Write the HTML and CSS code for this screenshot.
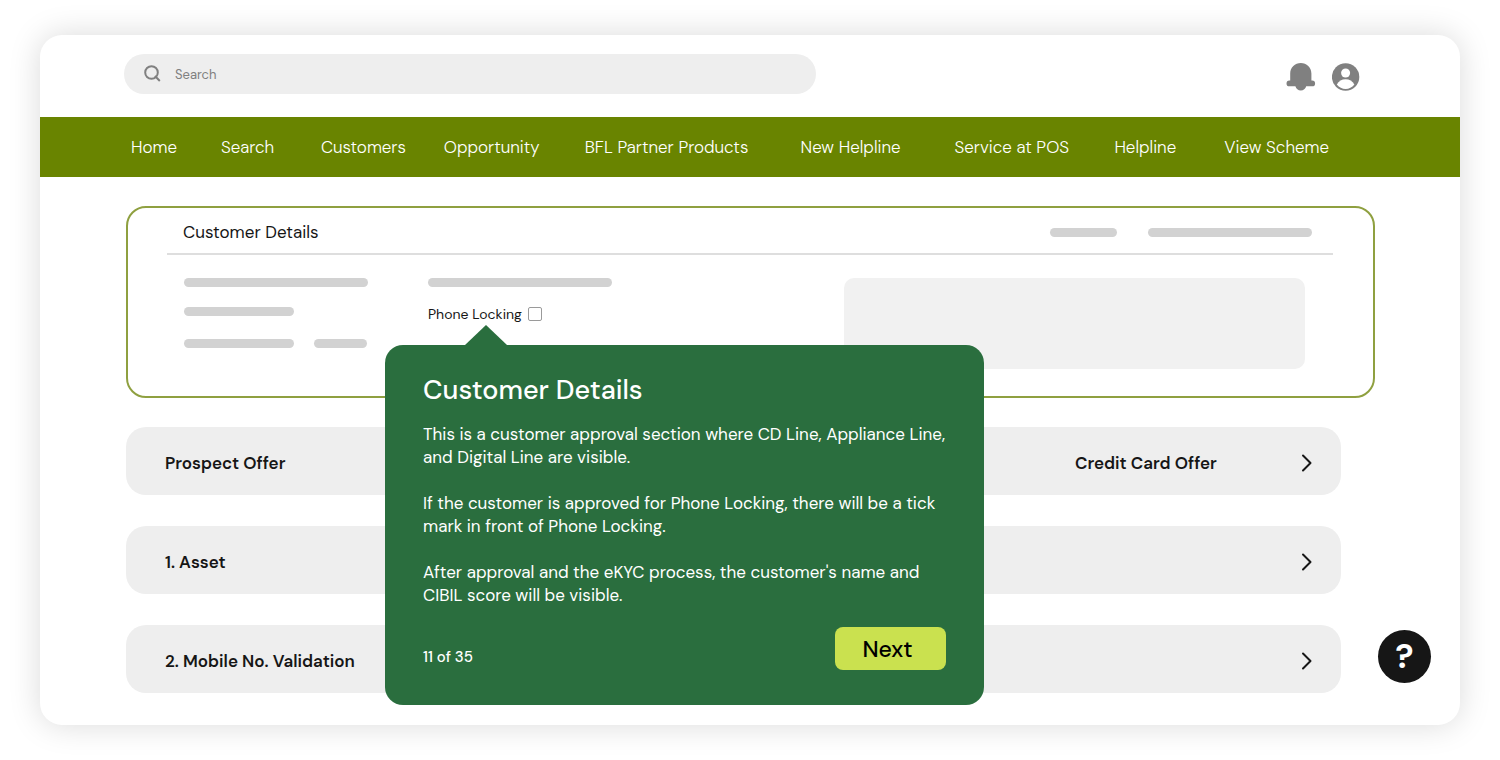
FILE: index.html
```html
<!DOCTYPE html>
<html lang="en">
<head>
    <meta charset="UTF-8">
    <meta name="viewport" content="width=device-width, initial-scale=1.0">
    <title>Customer Details</title>
    <link rel="stylesheet" href="styles.css">
</head>
<body>

    <div class="window">
        <header class="top-bar">
            <label class="search">
                <svg width="18" height="18" viewBox="0 0 18 18" fill="none" stroke="#808080" stroke-width="2" aria-hidden="true">
                    <circle cx="7.500" cy="7.500" r="6.300"/>
                    <path d="M11 11L15.800 16"/>
                </svg>
                <input type="search" placeholder="Search" aria-label="Search">
            </label>
            <div class="top-icons">
                <button type="button" aria-label="Notifications">
                    <svg width="30" height="28" viewBox="0 0 30 28" fill="#808080">
                        <path d="M4.200 10.500C4.200 4.300 9 0 14.800 0S25.400 4.300 25.400 10.500V17.500H26.200A2.900 2.900 0 0 1 26.200 23.300H20.200C19.500 26 17.500 27.500 14.800 27.500S10.100 26 9.400 23.300H3.400A2.900 2.900 0 0 1 3.400 17.500H4.200Z"/>
                    </svg>
                </button>
                <button type="button" aria-label="Account">
                    <svg width="28" height="28" viewBox="0 0 28 28">
                        <circle cx="13.600" cy="14" r="13.700" fill="#808080"/>
                        <circle cx="13.600" cy="10" r="4.500" fill="#fff"/>
                        <path d="M4.800 21.500C6.800 18 9.800 16.200 13.600 16.200S20.400 18 22.400 21.500C20 24.400 17 26 13.600 26S7.200 24.400 4.800 21.500Z" fill="#fff"/>
                    </svg>
                </button>
            </div>
        </header>

        <nav class="main-nav">
            <a href="#">Home</a>
            <a href="#">Search</a>
            <a href="#">Customers</a>
            <a href="#">Opportunity</a>
            <a href="#">BFL Partner Products</a>
            <a href="#">New Helpline</a>
            <a href="#">Service at POS</a>
            <a href="#">Helpline</a>
            <a href="#">View Scheme</a>
        </nav>

        <main>
            <!-- Customer card -->
            <section class="card">
                <div class="card-head">
                    <h2>Customer Details</h2>
                    <span class="bar bar-m"></span>
                    <span class="bar bar-l"></span>
                </div>
                <div class="card-body">
                    <div class="column">
                        <span class="bar bar-xl"></span>
                        <span class="bar bar-n"></span>
                        <div class="bar-pair">
                            <span class="bar bar-n"></span>
                            <span class="bar bar-s"></span>
                        </div>
                    </div>
                    <div class="column">
                        <span class="bar bar-xl"></span>
                        <div class="field">
                            <label for="phoneLocking">Phone Locking</label>
                            <input type="checkbox" id="phoneLocking">

                            <!-- Tour step, hangs below the field -->
                            <div class="tour" role="dialog" aria-labelledby="tourTitle">
                                <h3 id="tourTitle">Customer Details</h3>
                                <p>This is a customer approval section where CD Line, Appliance Line,<br>and Digital Line are visible.</p>
                                <p>If the customer is approved for Phone Locking, there will be a tick<br>mark in front of Phone Locking.</p>
                                <p>After approval and the eKYC process, the customer's name and<br>CIBIL score will be visible.</p>
                                <div class="tour-foot">
                                    <span>11 of 35</span>
                                    <button type="button" class="next-btn">Next</button>
                                </div>
                            </div>
                        </div>
                    </div>
                    <div class="panel"></div>
                </div>
            </section>

            <!-- Sections -->
            <div class="rows">
                <a href="#" class="row">
                    <span>Prospect Offer</span>
                    <span>Credit Card Offer</span>
                    <svg width="12" height="18" viewBox="0 0 12 18"><path d="M2 1.500L9.500 9L2 16.500"/></svg>
                </a>
                <a href="#" class="row">
                    <span>1. Asset</span>
                    <svg width="12" height="18" viewBox="0 0 12 18"><path d="M2 1.500L9.500 9L2 16.500"/></svg>
                </a>
                <a href="#" class="row">
                    <span>2. Mobile No. Validation</span>
                    <svg width="12" height="18" viewBox="0 0 12 18"><path d="M2 1.500L9.500 9L2 16.500"/></svg>
                </a>
            </div>
        </main>

        <button type="button" class="help-btn" aria-label="Help">?</button>
    </div>

</body>
</html>
```
FILE: styles.css
```css
* {
    box-sizing: border-box;
}
body {
    margin: 0;
    padding: 35px 40px;
    font-family: "DM Sans", Inter, "Liberation Sans", sans-serif;
    font-size: 17px;
    color: #161616;
    background-color: #ffffff;
}
h2, h3, p {
    margin: 0;
    font-weight: 400;
}
a {
    color: inherit;
    text-decoration: none;
}
button {
    padding: 0;
    border: none;
    background: none;
    font-family: inherit;
    cursor: pointer;
}
svg {
    display: block;
}
.window {
    position: relative;
    background-color: #ffffff;
    border-radius: 22px;
    box-shadow: 0 0 32px rgba(0, 0, 0, 0.15);
}

/* Top bar */
.top-bar {
    display: flex;
    justify-content: space-between;
    align-items: flex-start;
    padding: 19px 100px 23px 84px;
}
.search {
    display: flex;
    align-items: center;
    gap: 13px;
    width: 56%;
    height: 40px;
    padding: 0 20px;
    border-radius: 20px;
    background-color: #eeeeee;
}
.search input {
    flex: 1;
    padding: 0;
    border: none;
    outline: none;
    background: none;
    font-family: inherit;
    font-size: 13px;
    color: #161616;
}
.search input::placeholder {
    color: #808080;
}
.top-icons {
    display: flex;
    gap: 16px;
    padding-top: 9px;
}

/* Navigation */
.main-nav {
    display: grid;
    grid-template-columns: 90fr 100fr 123fr 141fr 216fr 154fr 160fr 110fr 104fr;
    align-items: center;
    height: 60px;
    padding: 0 131px 0 91px;
    background-color: #698400;
    color: #ffffff;
    font-weight: 300;
    white-space: nowrap;
}
main {
    padding: 29px 85px 32px 86px;
}

/* Customer card */
.card {
    border: 2px solid #8fa040;
    border-radius: 20px;
    padding: 0 40px 27px 39px;
}
.card-head {
    display: flex;
    align-items: center;
    height: 47px;
    padding: 3px 21px 0 16px;
    border-bottom: 2px solid #dedede;
}
.card-head h2 {
    flex: 1;
    font-size: 17px;
}
.bar {
    display: block;
    height: 9px;
    border-radius: 5px;
    background-color: #d2d2d2;
}
.bar-s { width: 53px; }
.bar-m { width: 67px; }
.bar-n { width: 110px; }
.bar-l { width: 164px; margin-left: 31px; }
.bar-xl { width: 184px; }
.card-body {
    display: grid;
    grid-template-columns: 244fr 416fr 461fr;
    padding: 23px 28px 0 17px;
}
.column {
    display: flex;
    flex-direction: column;
    gap: 20px;
}
.bar-pair {
    display: flex;
    gap: 20px;
    padding-top: 3px;
}
.panel {
    height: 91px;
    border-radius: 10px;
    background-color: #f1f1f1;
}
.field {
    position: relative;
    display: flex;
    align-items: center;
    gap: 6px;
    align-self: flex-start;
    height: 14px;
    font-size: 14px;
}
.field input {
    appearance: none;
    width: 14px;
    height: 14px;
    margin: 0;
    border: 1px solid #9a9a9a;
    border-radius: 2px;
    background-color: #ffffff;
}
.field input:checked {
    background-color: #698400;
}

/* Tour popup */
.tour {
    position: absolute;
    z-index: 2;
    top: 38px;
    left: -43px;
    width: 599px;
    padding: 28px 38px 35px;
    border-radius: 18px;
    background-color: #2a6e3e;
    color: #ffffff;
    font-size: 17px;
    line-height: 23px;
}
.tour::before {
    content: "";
    position: absolute;
    top: -20px;
    left: 80px;
    border: solid transparent;
    border-width: 0 21px 20px;
    border-bottom-color: #2a6e3e;
}
.tour h3 {
    margin-bottom: 16px;
    font-size: 27px;
    font-weight: 500;
    line-height: 34px;
}
.tour p {
    margin-bottom: 23px;
    white-space: nowrap;
}
.tour-foot {
    display: flex;
    justify-content: space-between;
    align-items: center;
    margin-top: -3px;
    font-size: 15px;
    font-weight: 500;
}
.tour-foot span {
    padding-top: 18px;
}
.next-btn {
    width: 111px;
    height: 43px;
    padding-right: 6px;
    border-radius: 8px;
    background-color: #cae14f;
    color: #000000;
    font-size: 23px;
    font-weight: 500;
}

/* Section rows */
.rows {
    display: grid;
    gap: 31px;
    margin: 29px 34px 0 0;
}
.row {
    display: grid;
    grid-template-columns: 910fr 226fr 12px;
    align-items: center;
    height: 68px;
    padding: 3px 28px 0 39px;
    border-radius: 20px;
    background-color: #eeeeee;
    font-weight: 600;
}
.row svg {
    grid-column: 3;
    fill: none;
    stroke: #161616;
    stroke-width: 2;
    stroke-linecap: round;
    stroke-linejoin: round;
}
.help-btn {
    position: absolute;
    right: 29px;
    bottom: 42px;
    width: 53px;
    height: 53px;
    border-radius: 50%;
    background-color: #161616;
    color: #ffffff;
    font-size: 34px;
    font-weight: 700;
}
```
